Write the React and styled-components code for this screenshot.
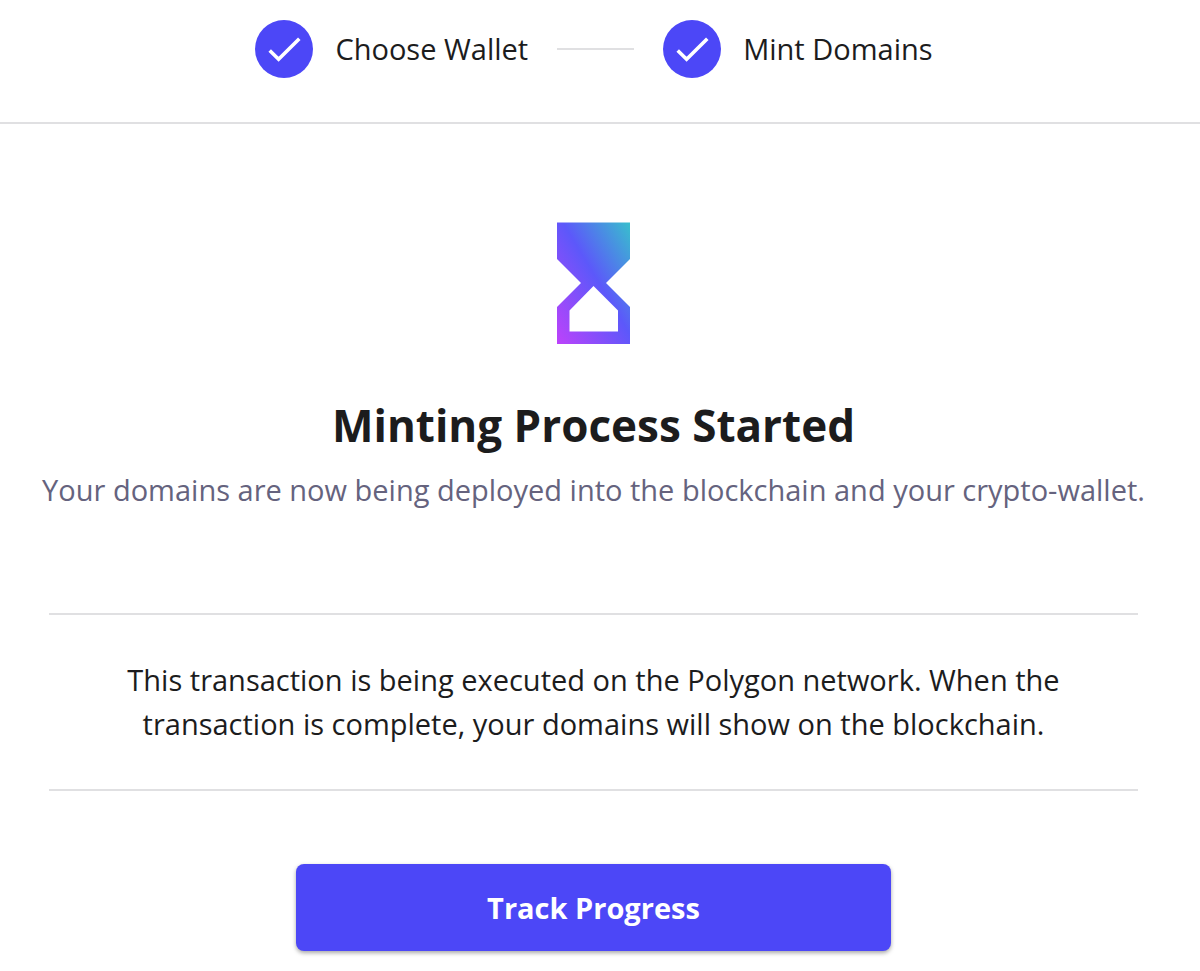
import React from "react";
import styled, { createGlobalStyle } from "styled-components";

const GlobalStyle = createGlobalStyle`
  *, *::before, *::after {
    box-sizing: border-box;
  }

  body {
    margin: 0;
    background: #fff;
    color: #1c1c1d;
    font-family: "Open Sans", sans-serif;
    font-size: 29px;
  }
`;

//Header with the steps
const Header = styled.header`
  padding: 20px 12px 44px 0;
  border-bottom: 2px solid #e0e0e2;
`;

const Stepper = styled.ol`
  display: flex;
  align-items: center;
  justify-content: center;
  gap: 29px;
  margin: 0;
  padding: 0;
  list-style: none;
`;

const StepItem = styled.li`
  display: flex;
  align-items: center;
  gap: 22px;
  line-height: 44px;
`;

const StepCircle = styled.span`
  display: grid;
  place-items: center;
  width: 58px;
  height: 58px;
  border-radius: 50%;
  background: #4c47f7;
`;

const Connector = styled.li`
  width: 77px;
  height: 2px;
  background: #e0e0e2;
`;

//Body of the page
const Main = styled.main`
  display: flex;
  flex-direction: column;
  align-items: center;
  padding: 98px 62px 20px 49px;
  text-align: center;
`;

const Title = styled.h1`
  margin: 50px 0 0;
  font-size: 44px;
  line-height: 62px;
  font-weight: 700;
`;

const Subtitle = styled.p`
  margin: 12px -20px 0;
  line-height: 44px;
  color: #65637e;
`;

const Notice = styled.section`
  align-self: stretch;
  margin: 101px 0 73px;
  padding: 43px 72px;
  border: solid #e0e0e2;
  border-width: 2px 0;
`;

const NoticeText = styled.p`
  margin: 0;
  line-height: 44px;
`;

const Button = styled.button`
  width: 100%;
  max-width: 595px;
  height: 87px;
  border: 0;
  border-radius: 8px;
  background: #4c47f7;
  box-shadow: 0 2px 4px rgba(0, 0, 0, 0.35);
  color: #fff;
  font: 700 29px "Open Sans", sans-serif;
  cursor: pointer;
`;

const Check = () => (
  <svg width="58" height="58" viewBox="0 0 58 58" fill="none" aria-hidden="true">
    <path d="M14.7 30.5L23.6 39.2L44.3 18.7" stroke="#fff" strokeWidth="3.6" />
  </svg>
);

const Hourglass = () => (
  <svg width="73" height="122" viewBox="0 0 73 122" aria-hidden="true">
    <defs>
      <linearGradient id="hourglass" x1="0" y1="1" x2="1" y2="0">
        <stop offset="0" stopColor="#bd42fb" />
        <stop offset="0.54" stopColor="#5c58fa" />
        <stop offset="1" stopColor="#38bfcd" />
      </linearGradient>
    </defs>
    <path
      fill="url(#hourglass)"
      fillRule="evenodd"
      d="M0 0.5H73V37L49 61L73 85V122H0V85L24 61L0 37ZM36.5 64L12.5 88.5V109.5H61V88.5Z"
    />
  </svg>
);

const Step = ({ children }) => (
  <StepItem>
    <StepCircle>
      <Check />
    </StepCircle>
    {children}
  </StepItem>
);

const App = () => (
  <>
    <GlobalStyle />
    <Header>
      <Stepper>
        <Step>Choose Wallet</Step>
        <Connector aria-hidden="true" />
        <Step>Mint Domains</Step>
      </Stepper>
    </Header>
    <Main>
      <Hourglass />
      <Title>Minting Process Started</Title>
      <Subtitle>
        Your domains are now being deployed into the blockchain and your crypto-wallet.
      </Subtitle>
      <Notice>
        <NoticeText>
          This transaction is being executed on the Polygon network. When the
          transaction is complete, your domains will show on the blockchain.
        </NoticeText>
      </Notice>
      <Button type="button">Track Progress</Button>
    </Main>
  </>
);

export default App;
